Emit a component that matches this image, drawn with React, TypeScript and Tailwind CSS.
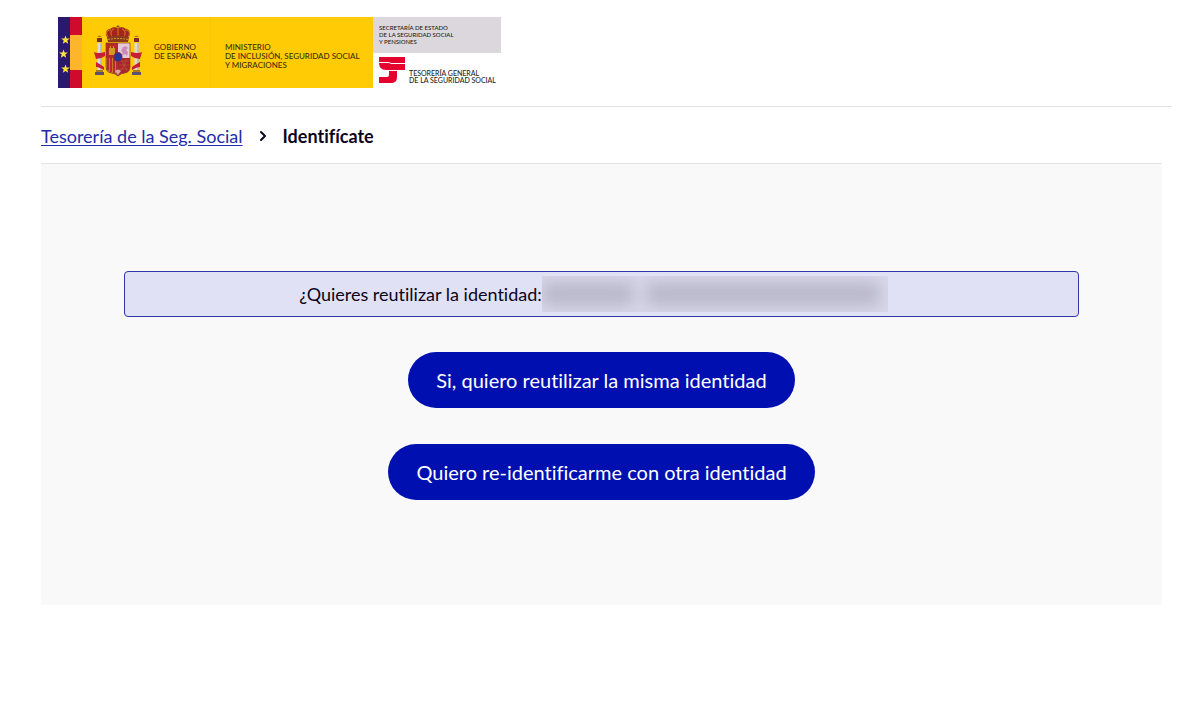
import { ChevronRight } from 'lucide-react'

const actions = [
  { id: 'reuse', label: 'Si, quiero reutilizar la misma identidad' },
  { id: 'other', label: 'Quiero re-identificarme con otra identidad' },
]

const STAR = 'M0-4.6 1.1-1.5 4.4-1.4 1.8.6 2.7 3.7 0 1.9-2.7 3.7-1.8.6-4.4-1.4-1.1-1.5Z'

function FlagStrip() {
  return (
    <svg viewBox="0 0 24 71" className="h-[71px] w-6" aria-hidden="true">
      <rect width="12" height="71" fill="#2a1a6e" />
      <rect x="12" width="12" height="71" fill="#fdb52c" />
      <rect x="12" width="12" height="18" fill="#cf0a2c" />
      <rect x="12" y="53" width="12" height="18" fill="#cf0a2c" />
      <g fill="#ffe23a">
        <path d={STAR} transform="translate(7.5 23)" />
        <path d={STAR} transform="translate(5.5 37)" />
        <path d={STAR} transform="translate(7.5 52)" />
      </g>
    </svg>
  )
}

function CoatOfArms() {
  return (
    <svg viewBox="0 0 48 52" className="h-[52px] w-12" aria-hidden="true">
      {/* Corona */}
      <path d="M14 13C10 9 12 4 17 3.500 19 1.500 22 2 24 3c2-1 5-1.500 7 .5 5 .5 7 5.500 3 9.500Z" fill="#a8201f" />
      <path d="M14 12C11 8 13 5 17 5M18 12c-2-4-1-7 2-8M24 12V3M30 12c2-4 1-7-2-8M34 12c3-4 1-7-3-7" fill="none" stroke="#c98a1c" />
      <path d="M13 12q11-3 22 0l-1 5H14Z" fill="#8c3a1c" />
      <path d="M14 14.500q10-2 20 0" fill="none" stroke="#d09a20" strokeDasharray="2 1" />
      <path d="M24 0v3M22.500 1.500h3" stroke="#8a5a14" />

      {/* Columnas */}
      <path d="M3 13h5v4H3zM40 13h5v4h-5z" fill="#7d2b2b" />
      <path d="M3 12q2.500-3 5 0M40 12q2.500-3 5 0" fill="#b07a16" />
      <path d="M3.500 18h4v27h-4zM40.500 18h4v27h-4z" fill="#dcdad8" />
      <path d="M7 18v27M44 18v27" stroke="#a9a5ad" />
      <path d="M2 45h7v2H2zM39 45h7v2h-7z" fill="#b07a16" />
      <path d="M1 47h9v3H1zM38 47h9v3h-9z" fill="#5c5070" />
      <path d="M0 27q4 2 11 0v4q-4 3-9 3ZM48 27q-4 2-11 0v4q4 3 9 3ZM2 37q4 2 8 5v3q-5-3-8-3ZM46 37q-4 2-8 5v3q5-3 8-3Z" fill="#c81f35" />

      {/* Escudo */}
      <path d="M12 18h24v24q0 5-5 6-4 0-7 3-3-3-7-3-5-1-5-6Z" fill="#a92331" />
      <path d="M12 18h12v15H12Z" fill="#b42a24" />
      <path d="M24 18h12v15H24Z" fill="#e8c9d8" />
      <path d="M15 30v-7h1v-2h1v2h2v-2h1v2h1v7Z" fill="#d49a1d" />
      <path d="M27 31l2-3-2-2 2-4 3-1 2 2-2 2 2 2-1 4-2-2Z" fill="#c98ab8" />
      <path d="M12 33h12v17q-2-2-6-2-6-1-6-6Z" fill="#c9782a" />
      <path d="M14 33v12M17 33v14M20 33v15M23 33v16" stroke="#b32430" strokeWidth="1.8" />
      <path d="M25 36h10M25 40h10M25 44h9M27 34l6 12M33 34l-6 12" stroke="#b8602a" strokeWidth=".6" />
      <path d="M21 46q3-3 6 0l-3 4Z" fill="#cfa9a9" />
      <ellipse cx="24" cy="32" rx="4.500" ry="5" fill="#7c2a50" />
      <ellipse cx="24" cy="32" rx="3.500" ry="4" fill="#25359a" />
      <path d="M12 18h24v24q0 5-5 6-4 0-7 3-3-3-7-3-5-1-5-6Z" fill="none" stroke="#8a3a2a" strokeWidth=".7" />
    </svg>
  )
}

function TreasuryMark() {
  return (
    <svg viewBox="0 0 26 27" className="h-[27px] w-[26px]" aria-hidden="true">
      <path d="M0 0H26V13H18V20Q18 26 12 26H0V20H8Q10 20 10 18V13H7Q0 13 0 6Z" fill="#e4032e" />
      <path d="M0 5.500H9Q11 5.500 12 6.500H26" fill="none" stroke="#fff" />
      <path d="M6 13.500H26" stroke="#fff" />
    </svg>
  )
}

function InstitutionalLogo() {
  return (
    <div className="flex h-[71px] w-fit font-medium text-[#1d1d1b]">
      <FlagStrip />
      <div className="flex bg-[#ffcb05] text-[8px] leading-[9px] whitespace-nowrap text-[#3d2f05]">
        <div className="flex w-[129px] gap-3 border-r border-[#fac406] pt-2 pl-3">
          <CoatOfArms />
          <p className="pt-[18px]">
            GOBIERNO
            <br />
            DE ESPAÑA
          </p>
        </div>
        <p className="w-[162px] pt-[26px] pl-3.5">
          MINISTERIO
          <br />
          DE INCLUSIÓN, SEGURIDAD SOCIAL
          <br />
          Y MIGRACIONES
        </p>
      </div>
      <div className="flex w-32 flex-col leading-[7px] whitespace-nowrap">
        <p className="h-9 bg-[#dcd7dd] pt-[7px] pl-1.5 text-[6px]">
          SECRETARÍA DE ESTADO
          <br />
          DE LA SEGURIDAD SOCIAL
          <br />
          Y PENSIONES
        </p>
        <div className="flex gap-1 pt-1 pl-1.5">
          <TreasuryMark />
          <p className="pt-[13px] text-[7px]">
            TESORERÍA GENERAL
            <br />
            DE LA SEGURIDAD SOCIAL
          </p>
        </div>
      </div>
    </div>
  )
}

// Dato personal oculto
function HiddenIdentity() {
  return (
    <span
      role="img"
      aria-label="Identidad oculta"
      className="flex h-9 w-[346px] items-center gap-3 overflow-hidden bg-[#d9d8eb] pr-2"
    >
      <span className="h-6 w-[92px] bg-[#bab7cb] blur-[8px]" />
      <span className="h-6 flex-1 bg-[#bab7cb] blur-[8px]" />
    </span>
  )
}

export default function App() {
  return (
    <div className="bg-white pr-7 pl-[41px] font-['Lato','Open_Sans',sans-serif] text-[#0d0420] [font-variant-ligatures:none]">
      <header className="border-b border-[#e3e3e3] pt-[17px] pb-[18px] pl-[17px]">
        <InstitutionalLogo />
      </header>

      <div className="pr-2.5">
        <nav aria-label="Ruta" className="border-b border-[#e3e3e3] pt-[17px] pb-[15px]">
          <ol className="flex items-center text-lg leading-6">
            <li>
              <a href="#" className="text-[#232ba8] underline underline-offset-2">
                Tesorería de la Seg. Social
              </a>
            </li>
            <li aria-hidden="true" className="px-3">
              <ChevronRight size={16} strokeWidth={3} />
            </li>
            <li aria-current="page" className="font-bold">
              Identifícate
            </li>
          </ol>
        </nav>

        <main className="flex flex-col items-center bg-[#f9f9fa] px-[83px] pt-[107px] pb-[105px]">
          <div className="flex w-full items-center justify-center rounded border border-[#3036a8] bg-[#e0e1f4] py-1 pr-4 text-lg">
            <p>¿Quieres reutilizar la identidad:</p>
            <HiddenIdentity />
          </div>

          <div className="flex flex-col items-center gap-9 pt-[35px]">
            {actions.map((action) => (
              <button
                key={action.id}
                type="button"
                className="rounded-full bg-[#0010b0] px-7 py-3.5 text-xl leading-7 text-white"
              >
                {action.label}
              </button>
            ))}
          </div>
        </main>
      </div>
    </div>
  )
}
